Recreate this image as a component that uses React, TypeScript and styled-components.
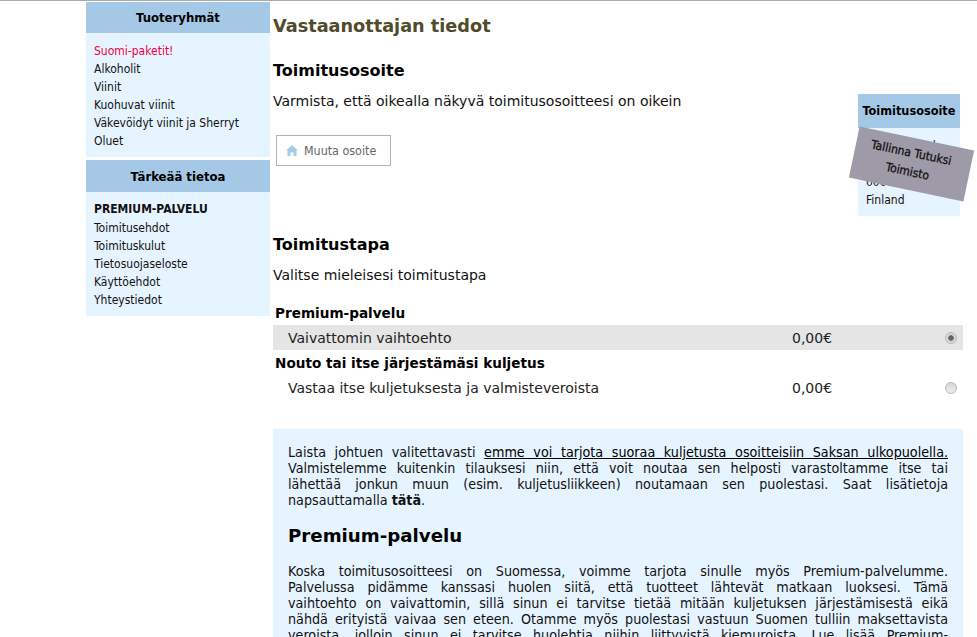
import styled, { createGlobalStyle } from 'styled-components';

const GlobalStyle = createGlobalStyle`
  html, body {
    margin: 0;
    padding: 0;
    height: 637px;
    overflow: hidden;
    background: #fff;
    color: #000;
    font-family: "DejaVu Sans", Verdana, sans-serif;
  }
`;

const Page = styled.div`
  border-top: 1px solid #aaa;
  padding-left: 86px;
  padding-top: 1px;
  display: flex;
  box-sizing: border-box;
  width: 977px;
`;

const Sidebar = styled.aside`
  width: 184px;
  flex-shrink: 0;
  display: flex;
  flex-direction: column;
  gap: 3px;
`;

const Panel = styled.section`
  background: #e6f4ff;
`;

const PanelTitle = styled.h3<{ $height: number; $nudge?: number }>`
  margin: 0;
  box-sizing: border-box;
  height: ${(p) => p.$height}px;
  padding-top: ${(p) => p.$nudge ?? 0}px;
  line-height: ${(p) => p.$height}px;
  background: #a5c8e6;
  font-size: 13px;
  font-weight: bold;
  font-stretch: condensed;
  text-align: center;
  color: #000;
`;

const NavList = styled.ul<{ $top: number }>`
  list-style: none;
  margin: 0;
  padding: ${(p) => p.$top}px 8px 7px;
`;

const NavItem = styled.li<{ $red?: boolean; $strong?: boolean }>`
  height: ${(p) => (p.$strong ? 19 : 18)}px;
  line-height: 18px;
  font-size: 12px;
  font-stretch: condensed;
  font-weight: ${(p) => (p.$strong ? 'bold' : 'normal')};
  color: ${(p) => (p.$red ? '#f5003c' : '#111')};
`;

const Main = styled.main`
  width: 690px;
  margin-left: 3px;
  flex-shrink: 0;
`;

const PageTitle = styled.h1`
  margin: 0;
  padding-top: 12px;
  height: 28px;
  line-height: 24px;
  font-size: 17.7px;
  font-weight: bold;
  color: #4f4b2b;
`;

const SectionTitle = styled.h2<{ $top: number }>`
  margin: ${(p) => p.$top}px 0 0;
  height: 24px;
  line-height: 24px;
  font-size: 16px;
  font-weight: bold;
`;

const Lead = styled.p`
  margin: 9px 0 0;
  line-height: 18px;
  font-size: 14px;
  font-stretch: normal;
  color: #111;
`;

const AddressRow = styled.div`
  display: flex;
  justify-content: space-between;
  align-items: flex-start;
  height: 123px;
`;

const ChangeButton = styled.button`
  margin: 25px 0 0 3px;
  width: 115px;
  height: 31px;
  box-sizing: border-box;
  display: flex;
  align-items: center;
  gap: 6px;
  padding: 0 0 0 9px;
  background: #fff;
  border: 1px solid #b4b4b4;
  font-family: inherit;
  font-size: 12.4px;
  font-stretch: condensed;
  color: #666;
`;

const AddressBox = styled.div`
  position: relative;
  width: 102px;
  height: 122px;
  margin-right: 3px;
  margin-top: -16px;
  background: #e6f4ff;
`;

const AddressTitle = styled.h3`
  margin: 0;
  height: 34px;
  line-height: 34px;
  background: #a5c8e6;
  font-size: 12.6px;
  font-weight: bold;
  font-stretch: condensed;
  text-align: center;
`;

const AddressLines = styled.div`
  padding: 9px 0 0 8px;
  font-size: 12px;
  font-stretch: condensed;
  line-height: 18px;
  color: #111;
`;

const Sticker = styled.div`
  position: absolute;
  left: -5px;
  top: 44px;
  width: 117px;
  height: 52px;
  transform: rotate(11.9deg);
  background: #9e9aa8;
  color: #111;
  text-align: center;
  font-size: 12px;
  font-stretch: condensed;
  font-weight: 500;
  -webkit-text-stroke: 0.3px #111;
  line-height: 19px;
  padding: 6px 5px 0 0;
  box-sizing: border-box;
`;

const GroupTitle = styled.div<{ $top: number }>`
  margin: ${(p) => p.$top}px 0 0 2px;
  line-height: 18px;
  font-size: 13.6px;
  font-weight: bold;
`;

const ShippingRow = styled.div<{ $selected?: boolean; $top: number }>`
  display: grid;
  grid-template-columns: 504px 1fr 12px;
  align-items: center;
  height: 25px;
  margin-top: ${(p) => p.$top}px;
  padding: 0 6px 0 15px;
  font-size: 14px;
  color: #222;
  background: ${(p) => (p.$selected ? '#e5e5e5' : 'transparent')};
`;

const Radio = styled.span<{ $checked?: boolean }>`
  width: 12px;
  height: 12px;
  box-sizing: border-box;
  border-radius: 50%;
  border: 1px solid #b8b8b8;
  background: ${(p) =>
    p.$checked
      ? 'radial-gradient(circle, #666 0 2.4px, #d8d8d8 3.2px)'
      : 'linear-gradient(#d8d8d8, #ececec)'};
`;

const InfoBox = styled.section`
  margin-top: 29px;
  padding: 15px 15px 15px;
  height: 300px;
  box-sizing: border-box;
  background: #e6f4ff;
  font-size: 14.2px;
  font-stretch: condensed;
  line-height: 16px;
  color: #111;
`;

const InfoText = styled.p`
  margin: 0;
`;

const Line = styled.span<{ $last?: boolean }>`
  display: block;
  text-align: justify;
  text-align-last: ${(p) => (p.$last ? 'left' : 'justify')};
  white-space: nowrap;
`;

const Underlined = styled.u`
  color: #000;
`;

const InfoTitle = styled.h2`
  margin: 16px 0 15px;
  height: 24px;
  line-height: 24px;
  font-size: 18.2px;
  font-stretch: normal;
  font-weight: bold;
  color: #000;
`;

const HomeIcon = () => (
  <svg width="12" height="11" viewBox="0 0 12 11" aria-hidden="true">
    <path d="M6 0 L12 5.5 H10.5 V11 H7.4 V7.5 H4.6 V11 H1.5 V5.5 H0 Z" fill="#a6cbe4" />
  </svg>
);

const App = () => {
  return (
    <>
      <GlobalStyle />
      <Page>
        <Sidebar>
          <Panel>
            <PanelTitle $height={31}>Tuoteryhmät</PanelTitle>
            <NavList $top={9}>
              <NavItem $red>Suomi-paketit!</NavItem>
              <NavItem>Alkoholit</NavItem>
              <NavItem>Viinit</NavItem>
              <NavItem>Kuohuvat viinit</NavItem>
              <NavItem>Väkevöidyt viinit ja Sherryt</NavItem>
              <NavItem>Oluet</NavItem>
            </NavList>
          </Panel>
          <Panel>
            <PanelTitle $height={32} $nudge={1}>
              Tärkeää tietoa
            </PanelTitle>
            <NavList $top={8}>
              <NavItem $strong>PREMIUM-PALVELU</NavItem>
              <NavItem>Toimitusehdot</NavItem>
              <NavItem>Toimituskulut</NavItem>
              <NavItem>Tietosuojaseloste</NavItem>
              <NavItem>Käyttöehdot</NavItem>
              <NavItem>Yhteystiedot</NavItem>
            </NavList>
          </Panel>
        </Sidebar>
        <Main>
          <PageTitle>Vastaanottajan tiedot</PageTitle>
          <SectionTitle $top={17}>Toimitusosoite</SectionTitle>
          <Lead>Varmista, että oikealla näkyvä toimitusosoitteesi on oikein</Lead>
          <AddressRow>
            <ChangeButton>
              <HomeIcon />
              Muuta osoite
            </ChangeButton>
            <AddressBox>
              <AddressTitle>Toimitusosoite</AddressTitle>
              <AddressLines>
                Tallinna Tutuk
                <br />
                Toimisto
                <br />
                00000 Helsinki
                <br />
                Finland
              </AddressLines>
              <Sticker>
                Tallinna Tutuksi
                <br />
                Toimisto
              </Sticker>
            </AddressBox>
          </AddressRow>
          <SectionTitle $top={0}>Toimitustapa</SectionTitle>
          <Lead>Valitse mieleisesi toimitustapa</Lead>
          <GroupTitle $top={20}>Premium-palvelu</GroupTitle>
          <ShippingRow $selected $top={3}>
            <span>Vaivattomin vaihtoehto</span>
            <span>0,00€</span>
            <Radio $checked />
          </ShippingRow>
          <GroupTitle $top={4}>Nouto tai itse järjestämäsi kuljetus</GroupTitle>
          <ShippingRow $top={3}>
            <span>Vastaa itse kuljetuksesta ja valmisteveroista</span>
            <span>0,00€</span>
            <Radio />
          </ShippingRow>
          <InfoBox>
            <InfoText>
              <Line>
                Laista johtuen valitettavasti{' '}
                <Underlined>emme voi tarjota suoraa kuljetusta osoitteisiin Saksan ulkopuolella.</Underlined>
              </Line>
              <Line>Valmistelemme kuitenkin tilauksesi niin, että voit noutaa sen helposti varastoltamme itse tai</Line>
              <Line>lähettää jonkun muun (esim. kuljetusliikkeen) noutamaan sen puolestasi. Saat lisätietoja</Line>
              <Line $last>
                napsauttamalla <b>tätä</b>.
              </Line>
            </InfoText>
            <InfoTitle>Premium-palvelu</InfoTitle>
            <InfoText>
              <Line>Koska toimitusosoitteesi on Suomessa, voimme tarjota sinulle myös Premium-palvelumme.</Line>
              <Line>Palvelussa pidämme kanssasi huolen siitä, että tuotteet lähtevät matkaan luoksesi. Tämä</Line>
              <Line>vaihtoehto on vaivattomin, sillä sinun ei tarvitse tietää mitään kuljetuksen järjestämisestä eikä</Line>
              <Line>nähdä erityistä vaivaa sen eteen. Otamme myös puolestasi vastuun Suomen tulliin maksettavista</Line>
              <Line>veroista, jolloin sinun ei tarvitse huolehtia niihin liittyvistä kiemuroista. Lue lisää Premium-</Line>
            </InfoText>
          </InfoBox>
        </Main>
      </Page>
    </>
  );
};

export default App;
